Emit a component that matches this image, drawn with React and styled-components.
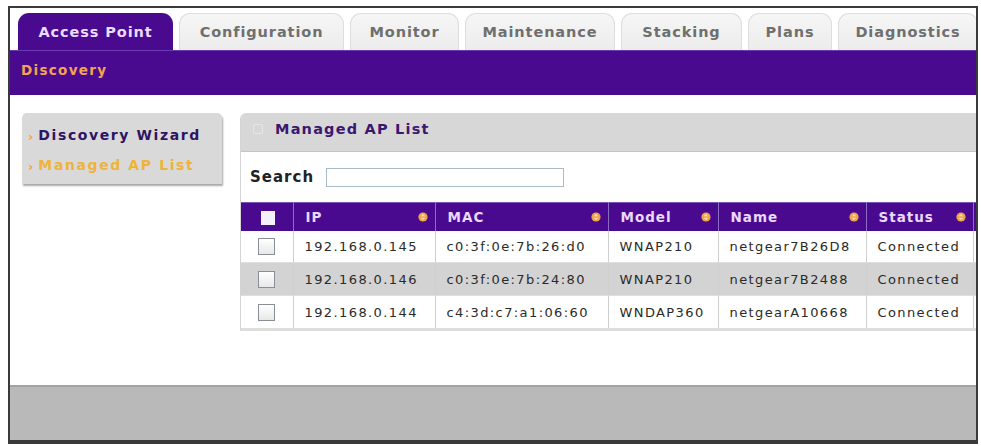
import React from 'react';
import styled, { createGlobalStyle, css } from 'styled-components';

const PURPLE = '#4a0a90';
const ORANGE = '#f2a44e';

const GlobalStyle = createGlobalStyle`
  html, body {
    margin: 0;
    padding: 0;
    background: #ffffff;
  }
  body {
    font-family: 'DejaVu Sans', Verdana, sans-serif;
  }
`;

const Frame = styled.div`
  margin: 6px 3px 0 8px;
  height: 432px;
  border: 2px solid #3a3a3a;
  border-bottom-width: 4px;
  display: flex;
  flex-direction: column;
  overflow: hidden;
  background: #ffffff;
`;

const TabBar = styled.div`
  height: 37px;
  padding: 5px 0 0 8px;
  display: flex;
  align-items: flex-end;
  gap: 6px;
  flex: none;
`;

const Tab = styled.div`
  height: 37px;
  box-sizing: border-box;
  width: ${(p) => p.$w}px;
  flex: none;
  display: flex;
  align-items: center;
  justify-content: center;
  border-radius: 11px 11px 0 0;
  font-size: 14.5px;
  font-weight: bold;
  letter-spacing: 0.9px;
  white-space: nowrap;
  ${(p) =>
    p.$active
      ? css`
          background: ${PURPLE};
          color: #eadcff;
        `
      : css`
          background: linear-gradient(#f6f6f6, #ececec);
          color: #6f6f6f;
          border: 1px solid #dedede;
          border-bottom: none;
        `}
`;

const SubBar = styled.div`
  height: 45px;
  flex: none;
  background: ${PURPLE};
  border-top: 1px solid #6a3ab0;
  box-sizing: border-box;
  padding: 11px 0 0 11px;
  color: ${ORANGE};
  font-size: 13.5px;
  font-weight: bold;
  letter-spacing: 1.3px;
`;

const Main = styled.div`
  height: 290px;
  flex: none;
  display: flex;
  align-items: flex-start;
  gap: 18px;
  padding: 18px 0 0 12px;
  box-sizing: border-box;
`;

const Nav = styled.div`
  width: 200px;
  height: 71px;
  flex: none;
  background: #d9d9d9;
  border-radius: 5px 5px 0 0;
  box-shadow: 1px 2px 2px #a9a9a9;
  box-sizing: border-box;
  padding: 12px 0 0 6px;
  display: flex;
  flex-direction: column;
  gap: 11px;
`;

const NavItem = styled.div`
  display: flex;
  align-items: center;
  gap: 5px;
  font-size: 14px;
  font-weight: bold;
  letter-spacing: 1.6px;
  white-space: nowrap;
  color: ${(p) => (p.$current ? '#f0b33a' : '#2d1462')};
  &::before {
    content: '›';
    color: ${ORANGE};
    font-size: 13px;
    margin-top: 4px;
    letter-spacing: 0;
  }
`;

const Panel = styled.div`
  width: 780px;
  flex: none;
  border-left: 1px solid #d4d4d4;
  border-bottom: 2px solid #dddddd;
  border-radius: 6px 0 0 0;
  overflow: hidden;
`;

const PanelHead = styled.div`
  height: 39px;
  background: #d7d7d7;
  border-bottom: 1px solid #c4c4c4;
  box-sizing: border-box;
  display: flex;
  align-items: center;
  padding: 0 0 6px 12px;
  gap: 12px;
  color: #3a1870;
  font-size: 14.5px;
  font-weight: bold;
  letter-spacing: 1.2px;
`;

const HeadIcon = styled.span`
  width: 8px;
  height: 8px;
  border: 1px solid #e6e6e6;
  border-radius: 2px;
`;

const SearchRow = styled.div`
  height: 50px;
  display: flex;
  align-items: center;
  gap: 12px;
  padding: 0 0 0 9px;
  box-sizing: border-box;
  font-size: 15px;
  font-weight: bold;
  letter-spacing: 1px;
  color: #222;
`;

const SearchInput = styled.input`
  width: 238px;
  height: 19px;
  box-sizing: border-box;
  border: 1px solid #a9bac8;
  margin: 0;
  padding: 0;
`;

const Table = styled.table`
  border-collapse: collapse;
  table-layout: fixed;
  width: 780px;
  font-size: 13px;
  letter-spacing: 1.4px;
`;

const Th = styled.th`
  height: 28px;
  background: ${PURPLE};
  color: #ead9ff;
  font-weight: bold;
  font-size: 13.5px;
  letter-spacing: 1px;
  text-align: left;
  padding: 0 7px 0 12px;
  border-right: 1px solid #8d6cc4;
  border-top: 1px solid #7a56b8;
  white-space: nowrap;
`;

const HeadCell = styled.div`
  display: flex;
  align-items: center;
  justify-content: space-between;
`;

const Td = styled.td`
  height: ${(p) => p.$h}px;
  padding: 0 0 0 11px;
  border-right: 1px solid #cfcfcf;
  border-bottom: 1px solid #dedede;
  color: #2a2a2a;
  background: ${(p) => (p.$odd ? '#d3d3d3' : '#ffffff')};
  white-space: nowrap;
  overflow: hidden;
`;

const CheckCell = styled(Td)`
  padding: 0;
  text-align: center;
`;

const Check = styled.span`
  display: inline-block;
  vertical-align: middle;
  width: ${(p) => (p.$head ? 14 : 17)}px;
  height: ${(p) => (p.$head ? 14 : 17)}px;
  box-sizing: border-box;
  margin-left: ${(p) => (p.$head ? 2 : 0)}px;
  background: ${(p) => (p.$head ? '#f4f0fa' : 'linear-gradient(#ffffff, #e8e8e8)')};
  border: ${(p) => (p.$head ? 'none' : '1px solid #8a8f96')};
`;

const Footer = styled.div`
  flex: 1;
  background: #b9b9b9;
  border-top: 2px solid #a3a3a3;
`;

function SortIcon() {
  return (
    <svg width="10" height="10" viewBox="0 0 10 10">
      <circle cx="5" cy="5" r="4.6" fill="#f0a548" />
      <path d="M5 1.8 L7.2 4.3 H2.8 Z" fill="#fbe0b8" />
      <path d="M5 8.2 L7.2 5.7 H2.8 Z" fill="#fbe0b8" />
    </svg>
  );
}

const tabs = [
  ['Access Point', 155],
  ['Configuration', 165],
  ['Monitor', 109],
  ['Maintenance', 150],
  ['Stacking', 121],
  ['Plans', 84],
  ['Diagnostics', 140],
];

const columns = [
  ['IP', 142],
  ['MAC', 173],
  ['Model', 110],
  ['Name', 148],
  ['Status', 107],
];

const rows = [
  ['192.168.0.145', 'c0:3f:0e:7b:26:d0', 'WNAP210', 'netgear7B26D8', 'Connected'],
  ['192.168.0.146', 'c0:3f:0e:7b:24:80', 'WNAP210', 'netgear7B2488', 'Connected'],
  ['192.168.0.144', 'c4:3d:c7:a1:06:60', 'WNDAP360', 'netgearA10668', 'Connected'],
];

const rowHeights = [31, 32, 32];

export default function App() {
  return (
    <>
      <GlobalStyle />
      <Frame>
        <TabBar>
          {tabs.map(([label, w], i) => (
            <Tab key={label} $w={w} $active={i === 0}>
              {label}
            </Tab>
          ))}
        </TabBar>
        <SubBar>Discovery</SubBar>
        <Main>
          <Nav>
            <NavItem>Discovery Wizard</NavItem>
            <NavItem $current>Managed AP List</NavItem>
          </Nav>
          <Panel>
            <PanelHead>
              <HeadIcon />
              Managed AP List
            </PanelHead>
            <SearchRow>
              Search
              <SearchInput type="text" />
            </SearchRow>
            <Table>
              <colgroup>
                <col style={{ width: 52 }} />
                {columns.map(([name, w]) => (
                  <col key={name} style={{ width: w }} />
                ))}
                <col />
              </colgroup>
              <thead>
                <tr>
                  <Th style={{ padding: 0, textAlign: 'center' }}>
                    <Check $head />
                  </Th>
                  {columns.map(([name]) => (
                    <Th key={name}>
                      <HeadCell>
                        {name}
                        <SortIcon />
                      </HeadCell>
                    </Th>
                  ))}
                  <Th />
                </tr>
              </thead>
              <tbody>
                {rows.map((r, i) => (
                  <tr key={r[0]}>
                    <CheckCell $h={rowHeights[i]} $odd={i === 1}>
                      <Check />
                    </CheckCell>
                    {r.map((v, j) => (
                      <Td key={j} $h={rowHeights[i]} $odd={i === 1}>
                        {v}
                      </Td>
                    ))}
                    <Td $h={rowHeights[i]} $odd={i === 1} />
                  </tr>
                ))}
              </tbody>
            </Table>
          </Panel>
        </Main>
        <Footer />
      </Frame>
    </>
  );
}
